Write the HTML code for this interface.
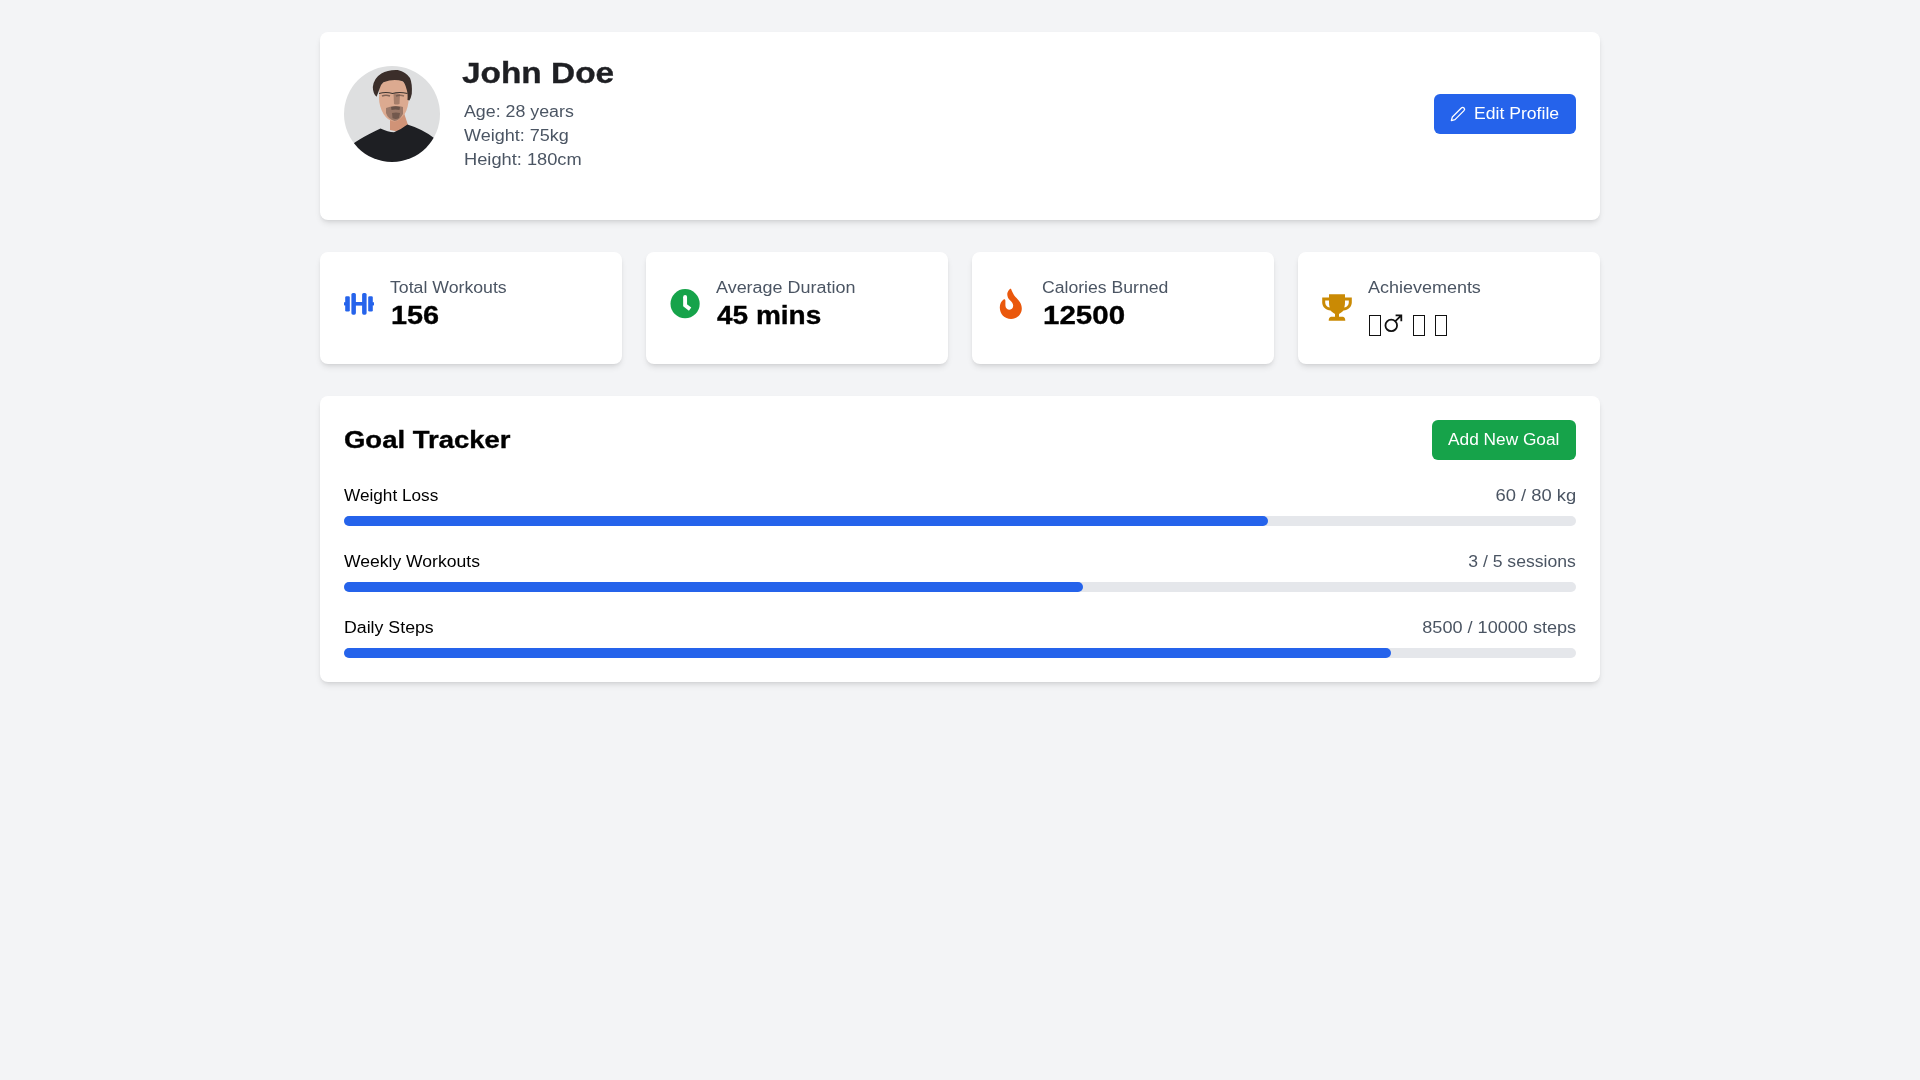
<!DOCTYPE html>
<html>
<head>
<meta charset="utf-8">
<style>
*{box-sizing:border-box;margin:0;padding:0}
html,body{width:1920px;height:1080px;overflow:hidden}
body{background:#f3f4f6;font-family:"Liberation Sans",sans-serif;color:#000;position:relative}
.card{position:absolute;background:#fff;border-radius:8px;box-shadow:0 4px 6px -1px rgba(0,0,0,.1),0 2px 4px -2px rgba(0,0,0,.1)}
.t{position:absolute;white-space:nowrap;line-height:1}
.gray{color:#4b5563}
.btn{position:absolute;border-radius:6px;color:#fff}
.track{position:absolute;left:24px;width:1232px;height:10px;border-radius:9999px;background:#e5e7eb}
.fill{position:absolute;left:0;top:0;height:10px;border-radius:9999px;background:#2563eb}
svg{position:absolute;overflow:visible}
.box{position:absolute;border:1.4px solid #111;width:11.5px;height:20.5px}
</style>
</head>
<body>

<!-- Profile card -->
<div class="card" style="left:320px;top:32px;width:1280px;height:188px">
  <svg style="left:24px;top:34px" width="96" height="96" viewBox="0 0 96 96">
    <defs><clipPath id="cc"><circle cx="48" cy="48" r="48"/></clipPath>
    <filter id="bl" x="-10%" y="-10%" width="120%" height="120%"><feGaussianBlur stdDeviation="0.7"/></filter></defs>
    <g clip-path="url(#cc)">
      <rect width="96" height="96" fill="#dedfe0"/>
      <g filter="url(#bl)">
      <path d="M46 50 L46 64 L56 66 L64 59 L60 47 Z" fill="#d09377"/>
      <path d="M35.5 20 Q38 14 50 13 Q60 13 63 21 Q65 30 64.5 36 Q63 46 59 50 Q54 55.5 50 55.5 Q44 55 39.5 48 Q35 40 35 32 Z" fill="#dcaa90"/>
      <path d="M49.5 27 Q53 27 56 28 L55.5 38 Q52 39 50 38 Z" fill="#7a5a4c" opacity=".55"/>
      <path d="M42 42 Q51 38.5 59 41 L59 48 Q55 55 50.5 55 Q44 53 42 47 Z" fill="#5a463d" opacity=".5"/><path d="M47 41 Q51 39.5 56 41 L55.5 44 Q51 43 47.5 44 Z" fill="#4a3a33" opacity=".6"/><path d="M48 47 Q52 46 56 47 L55 52 Q51.5 54 48.5 52 Z" fill="#4a3a33" opacity=".5"/>
      <path d="M38 30 Q42 28.5 46 30" fill="none" stroke="#5a463d" stroke-width="1.6" opacity=".7"/>
      <path d="M52 30 Q56 28.5 60 30" fill="none" stroke="#5a463d" stroke-width="1.6" opacity=".6"/>
      </g>
      <path d="M28.8 21 Q30 12 37.4 7.6 Q44 3.5 53.8 4 Q62 6 66 12 Q68.5 18 67.8 27.8 Q67 32 65.4 34.5 L63.5 34 Q64 27 62.5 23 Q61 17 58.6 15.3 Q50 12.5 39.4 16.2 Q36 19 35.5 23 L32.6 30.7 Q29 28 28.8 21 Z" fill="#3a2f2b" filter="url(#bl)"/>
      <path d="M35 27.5 Q42 25.5 48.5 27.5 Q55 25.5 63.5 27.5" fill="none" stroke="#3e3530" stroke-width="1.1"/>
      <path d="M0 96 L4 82 Q12 74 36.5 62.5 Q44 66 50 66.3 Q58 63 63.4 58.6 Q78 63 90 72 L96 96 Z" fill="#1e1f23"/>
    </g>
  </svg>
  <div class="t" id="name" style="left:142px;top:26px;font-size:30px;font-weight:bold;-webkit-text-stroke:0.35px currentColor;color:#1e1f23;transform:scaleX(1.113);transform-origin:0 0">John Doe</div>
  <div class="t gray" style="left:144px;top:72px;font-size:16px;transform:scaleX(1.112);transform-origin:0 0">Age: 28 years</div>
  <div class="t gray" style="left:144px;top:96px;font-size:16px;transform:scaleX(1.125);transform-origin:0 0">Weight: 75kg</div>
  <div class="t gray" style="left:144px;top:120px;font-size:16px;transform:scaleX(1.141);transform-origin:0 0">Height: 180cm</div>
  <div class="btn" style="left:1114px;top:62px;width:142px;height:40px;background:#2563eb">
    <svg style="left:16px;top:12px" width="16" height="16" viewBox="0 0 24 24">
      <path d="M17 3a2.828 2.828 0 1 1 4 4L7.5 20.5 2 22l1.5-5.5L17 3z" fill="none" stroke="#fff" stroke-width="1.9" stroke-linejoin="round" stroke-linecap="round"/>
    </svg>
    <div class="t" style="left:40px;top:12px;font-size:16px;transform:scaleX(1.1);transform-origin:0 0">Edit Profile</div>
  </div>
</div>

<!-- Stat cards -->
<div class="card" style="left:320px;top:252px;width:302px;height:112px">
  <svg style="left:24px;top:41px" width="30" height="22" viewBox="0 0 30 22">
    <rect x="0" y="9" width="2" height="3.6" rx="1.2" fill="#2563eb"/>
    <rect x="28" y="9" width="2" height="3.6" rx="1.2" fill="#2563eb"/>
    <rect x="11" y="9" width="8" height="3.6" fill="#2563eb"/>
    <rect x="1.2" y="3.2" width="4.6" height="15.3" rx="1.3" fill="#2563eb"/>
    <rect x="7.4" y="0" width="4.5" height="21.7" rx="1.6" fill="#2563eb"/>
    <rect x="18.1" y="0" width="4.5" height="21.7" rx="1.6" fill="#2563eb"/>
    <rect x="24.2" y="3.2" width="4.6" height="15.3" rx="1.3" fill="#2563eb"/>
  </svg>
  <div class="t gray" style="left:70px;top:28px;font-size:16px;transform:scaleX(1.106);transform-origin:0 0">Total Workouts</div>
  <div class="t" style="left:71.3px;top:51px;font-size:25px;font-weight:bold;-webkit-text-stroke:0.35px currentColor;transform:scaleX(1.153);transform-origin:0 0">156</div>
</div>

<div class="card" style="left:646px;top:252px;width:302px;height:112px">
  <svg style="left:24px;top:37px" width="30" height="30" viewBox="0 0 30 30">
    <circle cx="15.1" cy="14.7" r="14.6" fill="#16a34a"/>
    <path d="M15.1 7.9 L15.1 16.3 L20.1 20.1" fill="none" stroke="#fff" stroke-width="3.9" stroke-linecap="butt" stroke-linejoin="miter" stroke-miterlimit="2"/>
    <circle cx="15.1" cy="7.9" r="1.95" fill="#fff"/>
  </svg>
  <div class="t gray" style="left:70px;top:28px;font-size:16px;transform:scaleX(1.122);transform-origin:0 0">Average Duration</div>
  <div class="t" style="left:71.3px;top:51px;font-size:25px;font-weight:bold;-webkit-text-stroke:0.35px currentColor;transform:scaleX(1.12);transform-origin:0 0">45 mins</div>
</div>

<div class="card" style="left:972px;top:252px;width:302px;height:112px">
  <svg style="left:27px;top:36px" width="24" height="32" viewBox="0 0 24 32">
    <path d="M12.1 0.9 C13 3.5 14.5 6.5 16.5 9 C20 12.5 22.8 15.5 22.8 20.5 C22.8 26.5 18 30.9 12.1 30.9 C5.5 30.9 0.8 26 0.8 19.5 C0.8 16 2.2 13.3 4.6 11.6 C5.5 11 6.4 11.5 6.4 12.8 L6.4 17.5 C6.4 20 8.3 21.7 10.6 21.7 C12.8 21.7 14.2 20 14.2 17.8 C14.2 15.5 12.8 14 11 12.2 C9 10.2 8.1 8 8.3 5.5 C8.5 3.5 9.8 1.8 11 0.9 C11.4 0.6 11.9 0.6 12.1 0.9 Z" fill="#ea580c"/>
  </svg>
  <div class="t gray" style="left:70px;top:28px;font-size:16px;transform:scaleX(1.101);transform-origin:0 0">Calories Burned</div>
  <div class="t" style="left:71.3px;top:51px;font-size:25px;font-weight:bold;-webkit-text-stroke:0.35px currentColor;transform:scaleX(1.18);transform-origin:0 0">12500</div>
</div>

<div class="card" style="left:1298px;top:252px;width:302px;height:112px">
  <svg style="left:24px;top:42.4px" width="30" height="28" viewBox="0 0 30 28">
    <path d="M7 0.3 L23 0.3 L23 3.5 L29.8 3.5 L29.8 8.5 C29.8 13 26 16 21.5 16.5 C20 18.5 17.5 19.5 17 20 L17 22.8 L21 22.8 C22.5 23 23.3 24.5 23.3 26.8 L6.7 26.8 C6.7 24.5 7.5 23 9 22.8 L13 22.8 L13 20 C12.5 19.5 10 18.5 8.5 16.5 C4 16 0.2 13 0.2 8.5 L0.2 3.5 L7 3.5 Z M3.2 6.5 L3.2 8.5 C3.2 11 5 13 7.8 13.6 C7 11.5 7 9 7 6.5 Z M26.8 6.5 L23 6.5 C23 9 23 11.5 22.2 13.6 C25 13 26.8 11 26.8 8.5 Z" fill="#ca8a04" fill-rule="evenodd"/>
  </svg>
  <div class="t gray" style="left:70px;top:28px;font-size:16px;transform:scaleX(1.123);transform-origin:0 0">Achievements</div>
  <div class="box" style="left:71px;top:63px"></div>
  <svg style="left:0;top:0" width="302" height="112" viewBox="0 0 302 112">
    <circle cx="93.25" cy="73.4" r="5.8" fill="none" stroke="#111" stroke-width="1.8"/>
    <path d="M97.4 69.2 L103.3 63.3 M97.6 63.4 L103.3 63.4 L103.3 69.2" fill="none" stroke="#111" stroke-width="1.8" stroke-linecap="butt" stroke-linejoin="miter"/>
  </svg>
  <div class="box" style="left:115px;top:63px"></div>
  <div class="box" style="left:137px;top:63px"></div>
</div>

<!-- Goal tracker -->
<div class="card" style="left:320px;top:396px;width:1280px;height:286px">
  <div class="t" style="left:24px;top:32px;font-size:24px;font-weight:bold;-webkit-text-stroke:0.35px currentColor;transform:scaleX(1.145);transform-origin:0 0">Goal Tracker</div>
  <div class="btn" style="left:1112px;top:24px;width:144px;height:40px;background:#16a34a">
    <div class="t" style="left:16px;top:12px;font-size:16px;transform:scaleX(1.08);transform-origin:0 0">Add New Goal</div>
  </div>

  <div class="t" style="left:24px;top:92px;font-size:16px;transform:scaleX(1.074);transform-origin:0 0">Weight Loss</div>
  <div class="t gray" style="right:24px;top:92px;font-size:16px;transform:scaleX(1.149);transform-origin:100% 0">60 / 80 kg</div>
  <div class="track" style="top:120px"><div class="fill" style="width:924px"></div></div>

  <div class="t" style="left:24px;top:158px;font-size:16px;transform:scaleX(1.097);transform-origin:0 0">Weekly Workouts</div>
  <div class="t gray" style="right:24px;top:158px;font-size:16px;transform:scaleX(1.1);transform-origin:100% 0">3 / 5 sessions</div>
  <div class="track" style="top:186px"><div class="fill" style="width:739px"></div></div>

  <div class="t" style="left:24px;top:224px;font-size:16px;transform:scaleX(1.109);transform-origin:0 0">Daily Steps</div>
  <div class="t gray" style="right:24px;top:224px;font-size:16px;transform:scaleX(1.13);transform-origin:100% 0">8500 / 10000 steps</div>
  <div class="track" style="top:252px"><div class="fill" style="width:1047px"></div></div>
</div>

</body>
</html>
